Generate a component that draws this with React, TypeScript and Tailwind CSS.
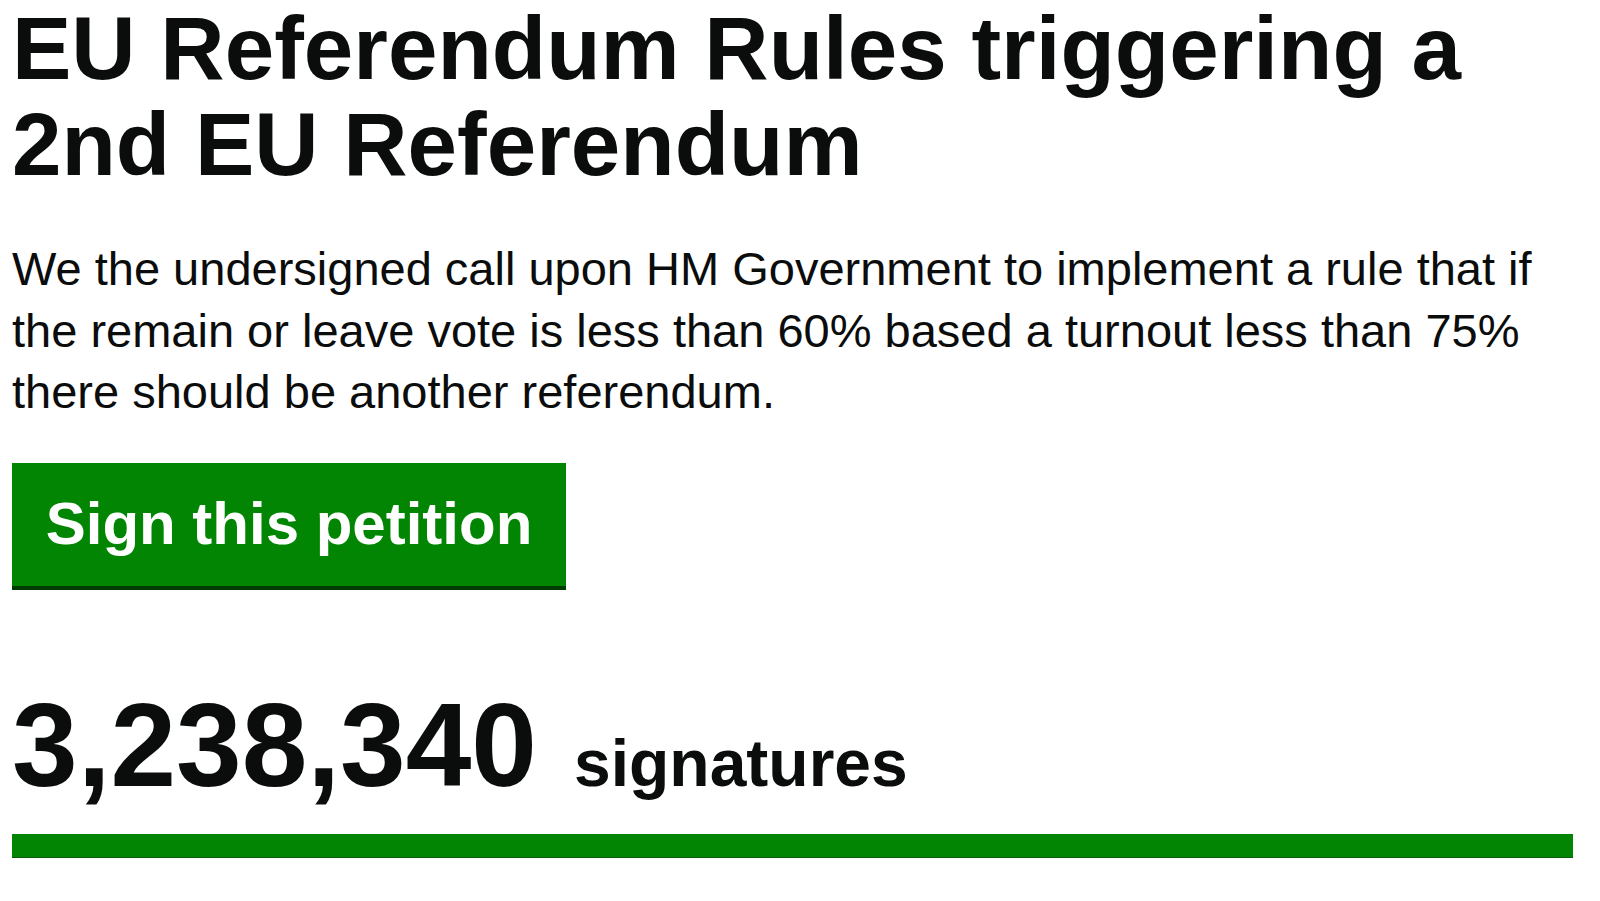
export default function App() {
  return (
    <main className="min-h-[901px] overflow-hidden bg-white pl-[12px] pr-[27px] font-['Liberation_Sans',Arial,sans-serif] text-[#0b0c0c]">
      <h1 className="text-[89px] font-bold leading-[96px]">
        EU Referendum Rules triggering a 2nd EU Referendum
      </h1>

      <p className="mt-[46px] text-[47px] leading-[61.5px]">
        We the undersigned call upon HM Government to implement a rule that if the remain or leave vote is less
        than 60% based a turnout less than 75% there should be another referendum.
      </p>

      <button
        type="button"
        className="mt-[40px] block w-[554px] border-b-[4px] border-[#003b00] bg-[#028502] py-[31.5px] text-center text-[60px] font-bold leading-none text-white"
      >
        Sign this petition
      </button>

      <div className="mt-[96px] flex items-baseline gap-[37px]">
        <span className="text-[118px] font-bold leading-none">3,238,340</span>
        <span className="text-[66px] font-bold leading-none">signatures</span>
      </div>

      <div className="mt-[30px] h-[24px] w-full border-b border-[#0a5a0a] bg-[#028502]" />
    </main>
  );
}
